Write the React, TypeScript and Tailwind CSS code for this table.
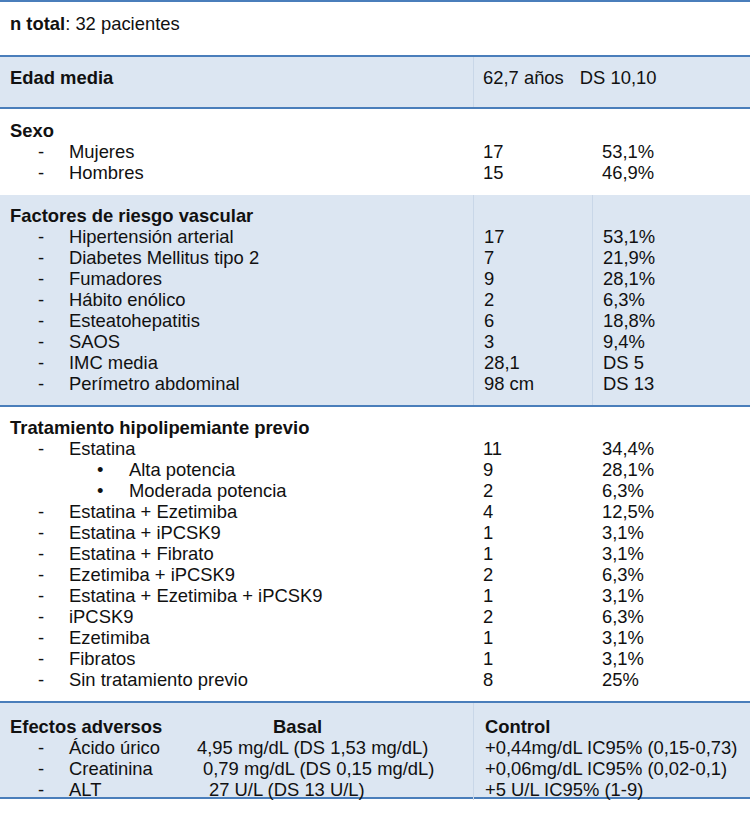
const Dash = ({ children }: { children: React.ReactNode }) => (
  <div className="flex pl-[28px]">
    <span className="w-[31px]">-</span>
    <span>{children}</span>
  </div>
);

const Bullet = ({ children }: { children: React.ReactNode }) => (
  <div className="flex pl-[87px]">
    <span className="w-[32px]">•</span>
    <span>{children}</span>
  </div>
);

const Rule = () => <div className="h-[2px] bg-[#4a7ebb]" />;

type Row = { label: string; n: string; p: string; sub?: boolean };

const factores: Row[] = [
  { label: 'Hipertensión arterial', n: '17', p: '53,1%' },
  { label: 'Diabetes Mellitus tipo 2', n: '7', p: '21,9%' },
  { label: 'Fumadores', n: '9', p: '28,1%' },
  { label: 'Hábito enólico', n: '2', p: '6,3%' },
  { label: 'Esteatohepatitis', n: '6', p: '18,8%' },
  { label: 'SAOS', n: '3', p: '9,4%' },
  { label: 'IMC media', n: '28,1', p: 'DS 5' },
  { label: 'Perímetro abdominal', n: '98 cm', p: 'DS 13' },
];

const tratamiento: Row[] = [
  { label: 'Estatina', n: '11', p: '34,4%' },
  { label: 'Alta potencia', n: '9', p: '28,1%', sub: true },
  { label: 'Moderada potencia', n: '2', p: '6,3%', sub: true },
  { label: 'Estatina + Ezetimiba', n: '4', p: '12,5%' },
  { label: 'Estatina + iPCSK9', n: '1', p: '3,1%' },
  { label: 'Estatina + Fibrato', n: '1', p: '3,1%' },
  { label: 'Ezetimiba + iPCSK9', n: '2', p: '6,3%' },
  { label: 'Estatina + Ezetimiba + iPCSK9', n: '1', p: '3,1%' },
  { label: 'iPCSK9', n: '2', p: '6,3%' },
  { label: 'Ezetimiba', n: '1', p: '3,1%' },
  { label: 'Fibratos', n: '1', p: '3,1%' },
  { label: 'Sin tratamiento previo', n: '8', p: '25%' },
];

const adversos = [
  { label: 'Ácido úrico', basal: '4,95 mg/dL (DS 1,53 mg/dL)', pad: 'pl-0', control: '+0,44mg/dL IC95% (0,15-0,73)' },
  { label: 'Creatinina', basal: '0,79 mg/dL (DS 0,15 mg/dL)', pad: 'pl-[6px]', control: '+0,06mg/dL IC95% (0,02-0,1)' },
  { label: 'ALT', basal: '27 U/L (DS 13 U/L)', pad: 'pl-[12px]', control: '+5 U/L IC95% (1-9)' },
];

function Section({ title, rows, band }: { title: string; rows: Row[]; band?: boolean }) {
  const divider = band ? 'border-l border-[#c9d7e8]' : '';
  return (
    <div className={`grid grid-cols-[473px_119px_1fr] ${band ? 'bg-[#dce6f2]' : 'bg-white'}`}>
      <div className="pl-[10px] pt-[10px] pb-[11px]">
        <div className="font-bold">{title}</div>
        {rows.map((r) =>
          r.sub ? <Bullet key={r.label}>{r.label}</Bullet> : <Dash key={r.label}>{r.label}</Dash>
        )}
      </div>
      <div className={`pl-[10px] pt-[10px] pb-[11px] ${divider}`}>
        <div>&nbsp;</div>
        {rows.map((r) => (
          <div key={r.label}>{r.n}</div>
        ))}
      </div>
      <div className={`pl-[10px] pt-[10px] pb-[11px] ${divider}`}>
        <div>&nbsp;</div>
        {rows.map((r) => (
          <div key={r.label}>{r.p}</div>
        ))}
      </div>
    </div>
  );
}

export default function App() {
  return (
    <div className="w-[750px] h-[813px] bg-white text-[18.4px] leading-[21px] text-[#111] font-['Liberation_Sans',Arial,sans-serif]">
      <Rule />
      <div className="h-[53px] pl-[10px] pt-[11px]">
        <span className="font-bold">n total</span>: 32 pacientes
      </div>
      <Rule />
      <div className="grid grid-cols-[473px_1fr] h-[50px] bg-[#dce6f2]">
        <div className="pl-[10px] pt-[10px] font-bold">Edad media</div>
        <div className="pl-[9px] pt-[10px] border-l border-[#c9d7e8]">
          62,7 años<span className="ml-[16px]">DS 10,10</span>
        </div>
      </div>
      <Rule />
      <div className="grid grid-cols-[473px_119px_1fr] h-[86px]">
        <div className="pl-[10px] pt-[11px]">
          <div className="font-bold">Sexo</div>
          <Dash>Mujeres</Dash>
          <Dash>Hombres</Dash>
        </div>
        <div className="pl-[10px] pt-[11px]">
          <div>&nbsp;</div>
          <div>17</div>
          <div>15</div>
        </div>
        <div className="pl-[10px] pt-[11px]">
          <div>&nbsp;</div>
          <div>53,1%</div>
          <div>46,9%</div>
        </div>
      </div>
      <Section title="Factores de riesgo vascular" rows={factores} band />
      <Rule />
      <Section title="Tratamiento hipolipemiante previo" rows={tratamiento} />
      <Rule />
      <div className="grid grid-cols-[473px_1fr] h-[94px] bg-[#dce6f2]">
        <div className="pl-[10px] pt-[13px]">
          <div className="flex">
            <span className="w-[263px] font-bold">Efectos adversos</span>
            <span className="font-bold">Basal</span>
          </div>
          {adversos.map((a) => (
            <div key={a.label} className="flex">
              <span className="pl-[28px] w-[59px]">-</span>
              <span className="w-[128px]">{a.label}</span>
              <span className={a.pad}>{a.basal}</span>
            </div>
          ))}
        </div>
        <div className="pl-[11px] pt-[13px] border-l border-[#c9d7e8]">
          <div className="font-bold">Control</div>
          {adversos.map((a) => (
            <div key={a.label}>{a.control}</div>
          ))}
        </div>
      </div>
      <Rule />
    </div>
  );
}
